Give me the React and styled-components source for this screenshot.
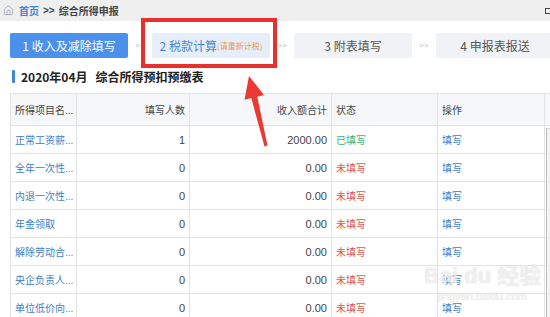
import React from 'react'
import styled, { createGlobalStyle } from 'styled-components'
import { House } from 'lucide-react'

const GlobalStyle = createGlobalStyle`
	html, body {
		margin: 0;
		padding: 0;
		background: #fff;
		overflow: hidden;
	}
	body {
		font-family: "Liberation Sans", "Noto Sans CJK SC", sans-serif;
		color: #333;
	}
`

const steps = [
	{ label: '1 收入及减除填写', kind: 'done' },
	{ label: '2 税款计算', note: '(请重新计税)', kind: 'current' },
	{ label: '3 附表填写', kind: 'todo' },
	{ label: '4 申报表报送', kind: 'todo' },
]

const rows = [
	{ name: '正常工资薪...', count: 1, total: '2000.00', done: true },
	{ name: '全年一次性...', count: 0, total: '0.00' },
	{ name: '内退一次性...', count: 0, total: '0.00' },
	{ name: '年金领取', count: 0, total: '0.00' },
	{ name: '解除劳动合...', count: 0, total: '0.00' },
	{ name: '央企负责人...', count: 0, total: '0.00' },
	{ name: '单位低价向...', count: 0, total: '0.00' },
]

export default function App () {
	return (
		<Page>
			<GlobalStyle />
			<TopBar>
				<House size={11} strokeWidth={1.4} color="#8a9aae" />
				<Crumb $link>首页</Crumb>
				<Crumb>&gt;&gt;</Crumb>
				<Crumb>综合所得申报</Crumb>
				<WinBox />
			</TopBar>

			<Main>
				<Steps>
					{steps.map((step, i) =>
						<React.Fragment key={i}>
							{i > 0 && <StepSep>&gt;&gt;</StepSep>}
							<Step $kind={step.kind}>
								{step.label}
								{step.note && <StepNote>{step.note}</StepNote>}
							</Step>
						</React.Fragment>
					)}
				</Steps>

				<Title>
					<TitleMark />
					2020年04月<TitleGap />综合所得预扣预缴表
				</Title>

				<Table>
					<HeadRow>
						<HeadCell>所得项目名...</HeadCell>
						<HeadCell $right>填写人数</HeadCell>
						<HeadCell $right>收入额合计</HeadCell>
						<HeadCell>状态</HeadCell>
						<HeadCell>操作</HeadCell>
					</HeadRow>
					<Body>
						<Rows>
							{rows.map((row, i) =>
								<Row key={i}>
									<Cell $link>{row.name}</Cell>
									<Cell $right>{row.count}</Cell>
									<Cell $right>{row.total}</Cell>
									<Cell $status={row.done ? 'done' : 'todo'}>{row.done ? '已填写' : '未填写'}</Cell>
									<Cell $link>填写</Cell>
								</Row>
							)}
						</Rows>
						<ScrollTrack>
							<ScrollArrow>▲</ScrollArrow>
						</ScrollTrack>
					</Body>
				</Table>
			</Main>

			<Watermark>
				<WatermarkLogo>Bai du 经验</WatermarkLogo>
				<WatermarkUrl>jingyan.baidu.com</WatermarkUrl>
			</Watermark>

			{/* annotation drawn on top of the screenshot */}
			<Highlight />
			<Arrow width="550" height="317" viewBox="0 0 550 317">
				<polygon
					points="249,76 264,95 257.3,96.7 267.5,145.6 264.5,146.4 251.3,98.1 244.5,99.8"
					fill="#ea3a34"
				/>
			</Arrow>
		</Page>
	)
}

const Page = styled.div`
	position: relative;
	width: 550px;
	height: 317px;
	overflow: hidden;
`

const TopBar = styled.div`
	display: flex;
	align-items: center;
	gap: 4px;
	height: 21px;
	padding-left: 3px;
	background: #efefef;
	font-size: 10px;
	font-weight: 600;
`

const Crumb = styled.span`
	color: ${p => p.$link ? '#3f86d9' : '#444'};
	margin-left: ${p => p.$link ? '1px' : '0'};
`

const WinBox = styled.span`
	margin-left: auto;
	margin-right: -2px;
	width: 5px;
	height: 4px;
	border: 1px solid #444;
`

const Main = styled.div`
	padding: 12px 0 0 10px;
`

const Steps = styled.div`
	display: flex;
	align-items: center;
	height: 25px;
`

const stepColors = {
	done: 'background: #4b90ea; color: #fff;',
	current: 'background: #e5eef9; color: #4d86cc;',
	todo: 'background: #f1f2f5; color: #555;',
}

const Step = styled.div`
	flex: 0 0 118px;
	height: 25px;
	display: flex;
	align-items: center;
	justify-content: center;
	font-family: "Noto Sans CJK SC", sans-serif;
	font-size: 12px;
	border-radius: 2px;
	${p => stepColors[p.$kind]}
`

const StepNote = styled.span`
	font-size: 8px;
	color: #ef9a55;
`

const StepSep = styled.div`
	flex: 0 0 24px;
	text-align: center;
	font-size: 8px;
	color: #bbb;
`

const Title = styled.div`
	display: flex;
	align-items: center;
	margin-top: 10px;
	height: 16px;
	font-family: "Noto Sans CJK SC", sans-serif;
	font-size: 12px;
	font-weight: 700;
	color: #222;
`

const TitleMark = styled.span`
	width: 3px;
	height: 13px;
	margin: 0 6px 0 2px;
	background: #3f86d9;
	border-radius: 1px;
`

const TitleGap = styled.span`
	width: 8px;
`

const Table = styled.div`
	margin-top: 9px;
	width: 552px;
	border-top: 1px solid #e3e3e3;
	border-left: 1px solid #e3e3e3;
	font-size: 10px;
`

const columns = '66px 113px 142px 106px 107px'

const HeadRow = styled.div`
	display: grid;
	grid-template-columns: ${columns} 1fr;
	height: 31px;
	background: #f6f7f9;
	border-bottom: 1px solid #e3e3e3;
`

const HeadCell = styled.div`
	display: flex;
	align-items: center;
	justify-content: ${p => p.$right ? 'flex-end' : 'flex-start'};
	padding: 0 4px;
	border-right: 1px solid #e3e3e3;
	color: #444;
	white-space: nowrap;
`

const Body = styled.div`
	display: flex;
`

const Rows = styled.div`
	flex: 0 0 535px;
`

const Row = styled.div`
	display: grid;
	grid-template-columns: ${columns};
	height: 27px;
	border-bottom: 1px solid #e3e3e3;
`

const cellColor = p => {
	if (p.$link) return '#3f7cc6'
	if (p.$status === 'done') return '#3bb26f'
	if (p.$status === 'todo') return '#e0554a'
	return '#444'
}

const Cell = styled.div`
	display: flex;
	align-items: center;
	justify-content: ${p => p.$right ? 'flex-end' : 'flex-start'};
	padding: 0 4px;
	border-right: 1px solid #e3e3e3;
	color: ${cellColor};
	font-size: ${p => p.$right ? '11px' : '10px'};
	white-space: nowrap;
`

const ScrollTrack = styled.div`
	flex: 0 0 17px;
	margin-top: 2px;
	background: #f4f4f4;
	border-left: 1px solid #bdbdbd;
	border-top: 1px solid #d0d0d0;
`

const ScrollArrow = styled.div`
	font-size: 5px;
	line-height: 7px;
	padding-left: 2px;
	color: #333;
`

const Watermark = styled.div`
	position: absolute;
	left: 424px;
	top: 262px;
	display: flex;
	flex-direction: column;
	align-items: center;
	white-space: nowrap;
	pointer-events: none;
	color: rgba(255, 255, 255, 0.7);
	text-shadow: 0 0 1px rgba(170, 170, 170, 0.6);
`

const WatermarkLogo = styled.div`
	font-family: "Liberation Sans", "Noto Sans CJK SC", sans-serif;
	font-size: 22px;
	font-weight: 700;
	line-height: 28px;
`

const WatermarkUrl = styled.div`
	font-size: 11px;
	line-height: 12px;
`

const Highlight = styled.div`
	position: absolute;
	left: 141px;
	top: 18px;
	width: 136px;
	height: 50px;
	box-sizing: border-box;
	border: 4px solid #e8312c;
	pointer-events: none;
`

const Arrow = styled.svg`
	position: absolute;
	left: 0;
	top: 0;
	pointer-events: none;
`
